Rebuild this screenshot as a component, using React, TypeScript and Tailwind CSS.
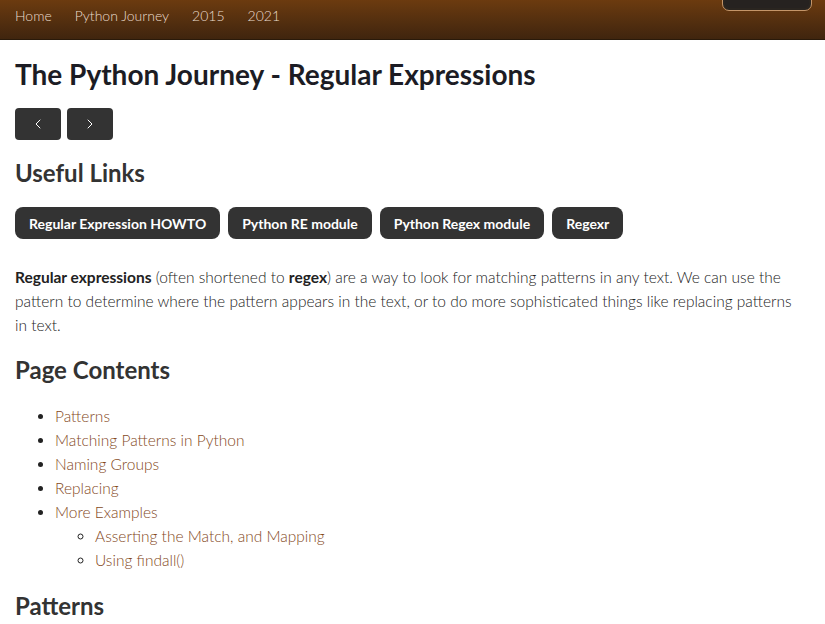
import { ChevronLeft, ChevronRight } from 'lucide-react';

const navItems = ['Home', 'Python Journey', '2015', '2021'];

const usefulLinks = ['Regular Expression HOWTO', 'Python RE module', 'Python Regex module', 'Regexr'];

const contents = ['Patterns', 'Matching Patterns in Python', 'Naming Groups', 'Replacing'];

export default function App() {
  return (
    <div className="min-h-[624px] bg-white font-['Lato','Liberation_Sans',sans-serif] text-[#222]">
      {/* top bar */}
      <nav className="relative h-10 bg-gradient-to-b from-[#6c3b0f] to-[#40250e] border-b border-[#2a1a0a]">
        <ul className="flex h-[30px] items-center gap-[23px] pl-[15px]">
          {navItems.map((item) => (
            <li key={item}>
              <a className="text-[14px] font-light text-[#eadccd]">{item}</a>
            </li>
          ))}
        </ul>
        <div className="absolute right-[13px] top-[-8px] h-[19px] w-[90px] rounded-[7px] border border-[#c49568] bg-[#2a2520] p-[2px]">
          <div className="h-full w-full rounded-[5px] bg-[#262220]" />
        </div>
      </nav>

      <main className="px-[15px]">
        <h1 className="mt-[16px] text-[28px] font-bold leading-[36px] text-[#1c1c24]">
          The Python Journey - Regular Expressions
        </h1>

        <div className="mt-[16px] flex gap-[6px]">
          <button className="flex h-8 w-[46px] items-center justify-center rounded-[4px] bg-[#333]">
            <ChevronLeft className="h-[16px] w-[16px] text-white" strokeWidth={1.5} />
          </button>
          <button className="flex h-8 w-[46px] items-center justify-center rounded-[4px] bg-[#333]">
            <ChevronRight className="h-[16px] w-[16px] text-white" strokeWidth={1.5} />
          </button>
        </div>

        <h2 className="mt-[18px] text-[24px] font-bold leading-[30px] text-[#333]">Useful Links</h2>

        <div className="mt-[19px] flex gap-2">
          {usefulLinks.map((link) => (
            <a
              key={link}
              className="flex h-8 items-center rounded-[8px] bg-[#333] px-[14px] text-[14px] font-bold text-white"
            >
              {link}
            </a>
          ))}
        </div>

        <p className="mt-[26px] pr-[12px] text-[15.5px] font-light leading-6">
          <b className="font-bold">Regular expressions</b> (often shortened to <b className="font-bold">regex</b>) are a
          way to look for matching patterns in any text. We can use the pattern to determine where the pattern appears
          in the text, or to do more sophisticated things like replacing patterns in text.
        </p>

        <h2 className="mt-[18px] text-[24px] font-bold leading-[30px] text-[#333]">Page Contents</h2>

        <ul className="mt-[19px] list-disc pl-10 text-[15.5px] font-light leading-6">
          {contents.map((c) => (
            <li key={c}>
              <a className="text-[#84491c]">{c}</a>
            </li>
          ))}
          <li>
            <a className="text-[#84491c]">More Examples</a>
            <ul className="list-[circle] pl-10">
              <li>
                <a className="text-[#84491c]">Asserting the Match, and Mapping</a>
              </li>
              <li>
                <a className="text-[#84491c]">Using findall()</a>
              </li>
            </ul>
          </li>
        </ul>

        <h2 className="mt-[19px] text-[24px] font-bold leading-[30px] text-[#333]">Patterns</h2>
      </main>
    </div>
  );
}
